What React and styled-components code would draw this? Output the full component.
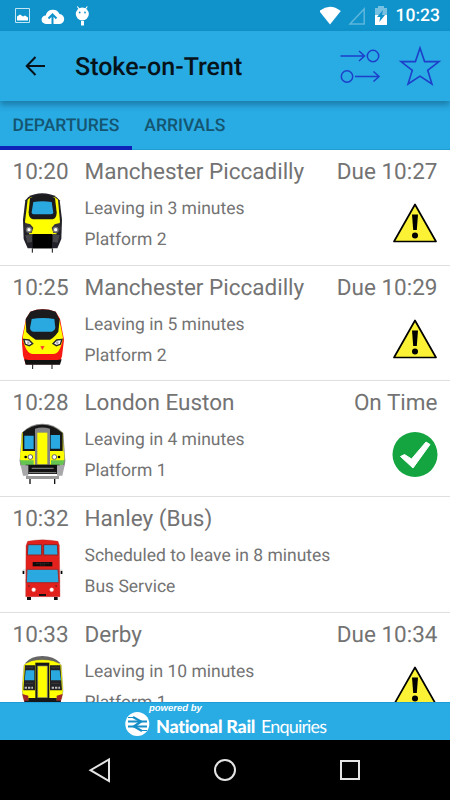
import React from "react";
import styled, { createGlobalStyle } from "styled-components";

const GlobalStyle = createGlobalStyle`
  * {
    box-sizing: border-box;
  }
  body {
    margin: 0;
    background: #fff;
    font-family: Roboto, "Liberation Sans", sans-serif;
    text-rendering: geometricPrecision;
  }
`;
const Screen = styled.div`
  display: flex;
  flex-direction: column;
  width: 450px;
  height: 800px;
  overflow: hidden;
`;
const Icon = styled.svg`
  display: block;
  flex: none;
`;
const StatusBar = styled.div`
  display: flex;
  flex: none;
  justify-content: space-between;
  height: 31px;
  background: #1093cb;
`;
const Clock = styled.span`
  width: 55px;
  padding-right: 10px;
  color: #fff;
  font-size: 17.5px;
  font-weight: 500;
  line-height: 33px;
  text-align: right;
  white-space: nowrap;
`;
const StatusGroup = styled.div`
  display: flex;
`;
const Toolbar = styled.header`
  position: relative;
  z-index: 1;
  display: flex;
  flex: none;
  align-items: center;
  height: 70px;
  background: #29abe4;
  box-shadow: 0 4px 6px rgba(0, 40, 60, 0.35);
`;
const Title = styled.h1`
  flex: 1;
  margin: 0;
  padding-top: 4px;
  color: #07131a;
  font-size: 25px;
  font-weight: 500;
  line-height: 30px;
`;
const Tabs = styled.nav`
  display: flex;
  flex: none;
  height: 49px;
  background: #29abe4;
  box-shadow: inset 0 -1px #209cd2;
`;
const Tab = styled.div`
  height: 49px;
  padding: 0 12.5px;
  border-bottom: 4px solid ${(p) => (p.$active ? "#0e22b8" : "transparent")};
  color: #145571;
  font-size: 17.5px;
  font-weight: 500;
  line-height: 51px;
`;
const List = styled.main`
  flex: 1;
  min-height: 0;
  overflow: hidden;
  background: #fff;
`;
const Row = styled.div`
  display: grid;
  grid-template-columns: 72px 1fr auto;
  grid-template-rows: 40px 1fr;
  height: 115.67px;
  padding: 0 12.5px;
  border-bottom: 1px solid #dfdfdf;
  color: #737373;
`;
const Heading = styled.span`
  font-size: 22.5px;
  line-height: 45px;
  white-space: nowrap;
`;
const TrainCell = styled.div`
  padding-left: 9.5px;
`;
const Details = styled.div`
  padding-top: 4px;
  font-size: 17.5px;
  line-height: 31px;
  white-space: nowrap;
`;
const State = styled.div`
  display: flex;
  justify-content: flex-end;
  padding-top: 11px;
`;
const Footer = styled.footer`
  display: flex;
  flex: none;
  height: 38px;
  padding-left: 125px;
  border-top: 1px solid #1d9bd8;
  background: #29abe4;
  color: #fff;
`;
const Brand = styled.div`
  padding-left: 6px;
`;
const Powered = styled.div`
  margin-left: -7px;
  font: italic bold 9.5px/12px "Liberation Sans", Arial, sans-serif;
`;
const BrandName = styled.div`
  padding-top: 1px;
  font: 400 18px/21px Lato, sans-serif;
  letter-spacing: -0.85px;
  white-space: nowrap;
`;
const Strong = styled.b`
  margin-right: 6px;
  font-weight: 900;
  letter-spacing: -0.3px;
`;
const NavBar = styled.div`
  flex: none;
  height: 60px;
  background: #000;
`;

const Notifications = () => (
  <Icon width="100" height="31" fill="#fff">
    <path d="M15.5 8.5h14v14h-14z" fill="none" stroke="#c3e4f2" />
    <path d="M17 20.500v-4l3-2 3 2 2-1 3 2v3z" />
    <path d="M46 24a4.3 4.3 0 0 1-.3-8.6A7.3 7.3 0 0 1 59.5 14a5 5 0 0 1-.6 10z" />
    <path d="M52.5 24v-8M48.5 18.5l4-4 4 4" fill="none" stroke="#1093cb" strokeWidth="2" />
    <circle cx="82.3" cy="14" r="6.5" />
    <path d="m77.3 6.5 3 4M87.3 6.5l-3 4" stroke="#fff" strokeWidth="1.2" />
    <path d="M81 21h3v4.5h-3z" />
    <circle cx="79.7" cy="12.5" r=".9" fill="#1093cb" />
    <circle cx="85" cy="12.5" r=".9" fill="#1093cb" />
  </Icon>
);
const Signals = () => (
  <Icon width="75" height="31" fill="#fff">
    <path d="M-.8 11Q10 2.500 20.800 11L10 24.500z" />
    <path d="M44.200 9v15H30z" fill="none" stroke="#5db6dc" strokeWidth="1.500" />
    <path d="M55 8h3V6h6v2h3v7H55z" fill="#76c1e1" />
    <path d="M55 15h12v10H55z" />
    <path d="m63 10-6 7h3.300l-1 5 5.700-7h-3z" fill="#1093cb" />
  </Icon>
);
const BackArrow = () => (
  <Icon width="75" height="70" fill="none" stroke="#07131a" strokeWidth="2">
    <path d="M45 35H27M35.500 26 26.700 35l8.800 9" />
  </Icon>
);
const Actions = () => (
  <Icon width="110" height="70" fill="none" stroke="#1d3fca" strokeWidth="1.500">
    <path d="M.5 25h24M19 20l5.500 5-5.500 5" />
    <circle cx="33" cy="25" r="5.700" />
    <circle cx="7" cy="45.500" r="5.700" />
    <path d="M15 45.500h24M33.500 40.500l5.500 5-5.500 5" />
    <path d="m80 17 4.600 13.600H99L87.700 39.300 92 53 80 45.200 68 53l4.300-13.700L61 30.600h14.400z" strokeWidth="1.600" />
  </Icon>
);

const Warning = () => (
  <Icon width="46" height="42" viewBox="0 0 46 42">
    <path d="M23 3.500 44 40.500H2z" fill="#fbf236" stroke="#000" strokeWidth="1.700" strokeLinejoin="round" />
    <path d="M20 13.500h6l-1.200 15.500h-3.600z" />
    <circle cx="23" cy="34.500" r="3" />
  </Icon>
);
const Tick = () => (
  <Icon width="46" height="46" viewBox="0 0 46 46">
    <circle cx="23" cy="22.500" r="22.500" fill="#14a541" />
    <path d="m8.500 24.500 4-2 7 4.500L34 10l4 2.500L21 36z" fill="#fff" stroke="#fff" strokeLinejoin="round" />
  </Icon>
);

const Voyager = () => (
  <Icon width="44" height="64" viewBox="36 15 132 192">
    <path d="M55 36Q73 25 97 25t42 11l10 10 7 58-2 58-12 28H53l-12-28-2-58 7-58z" fill="#222129" />
    <path d="M53 44 62 37 135 37 144 44 150 110 139 148H58L45 110z" fill="#ff0" />
    <path d="M60 39Q97 19 135 39L140 82Q140 101 128 103H69Q56 101 56 82z" fill="#1b1a1d" />
    <path d="M70 51Q97 47 125 51L130 83Q128 88 122 88H71Q65 88 65 82z" fill="#2aa9e0" />
    <path d="m46 114 15 4 9 10-5 16-15 1-8-15zM149 114l-15 4-9 10 5 16 15 1 8-15z" fill="#353338" />
    <circle cx="57" cy="134" r="7" fill="#fff" stroke="#777" strokeWidth="4" />
    <circle cx="137" cy="134" r="7" fill="#fff" stroke="#777" strokeWidth="4" />
    <path d="M68 147h58v43H68z" />
    <path d="m46 150 20-2v23l-14 2zM149 150l-20-2v23l14 2z" fill="#454549" />
    <path d="M67 190v13M127 190v13" stroke="#111" strokeWidth="3" />
  </Icon>
);
const Pendolino = () => (
  <Icon width="44" height="64" viewBox="36 17 132 192">
    <path d="M61 34Q97 20 137 34l13 21 12 63-6 49-8 25H47l-8-27-4-47 13-63z" fill="#f71a12" />
    <path d="M49 56 59 39H137L148 58 159 112Q151 160 130 161H69Q47 160 38 112z" fill="#ff0" />
    <path d="M61 34Q97 20 137 34L149 58 145 94Q132 112 120 118H77Q62 110 49 95L47 56z" fill="#1b1a1d" />
    <path d="M65 56Q98 50 133 56L136 83Q134 92 126 94H70Q61 92 60 83z" fill="#2aa9e0" />
    <path d="m41 117 16 2 11 11-10 6-12-4zM156 117l-16 2-11 11 10 6 12-4z" fill="#fff" stroke="#25272a" strokeWidth="4" />
    <circle cx="55" cy="127" r="4" fill="#aaa" />
    <circle cx="142" cy="127" r="4" fill="#aaa" />
    <path d="m92 138 5 10 6-10z" fill="#f33" stroke="#f33" />
    <path d="m43 177 12 2h88l12-2-5 16H47z" fill="#111" />
    <path d="M68 192v14M126 192v14" stroke="#111" strokeWidth="3" />
  </Icon>
);
const Midland = () => (
  <Icon width="44" height="64" viewBox="36 19 132 192" overflow="visible">
    <path d="M35 55Q60 27 97 27t63 28l6 83-2 15H31l-2-15z" fill="#888" />
    <path d="M36 55Q64 33 97 33t61 22l4 78-4 17H36l-5-17z" fill="#ff0" />
    <path d="M38 53Q64 30 97 30t61 25v54H38z" fill="#171718" />
    <path d="M43 63h28v40H43zM122 61h28v41h-28z" fill="#2aa9e0" />
    <path d="M31 113h40v22H31zM123 113h40v22h-40z" fill="#ff0" />
    <path d="M29 137h42v14H35zM123 137h42l-7 14h-35z" fill="#65c553" />
    <path d="M75 42q22-7 45 0v109H75z" fill="#858585" />
    <path d="M82 54h30v95H82z" fill="#ff0" />
    <path d="M47 150h102v28H47z" fill="#111" />
    <path d="M32 152h23v31H39zM141 152h23l-7 31h-16z" fill="#a7a7aa" />
    <path d="M65 161h66M57 174h82" stroke="#777" strokeWidth="4" />
    <path d="M48 184h99v9H48z" fill="#999" />
    <circle cx="47" cy="127" r="4" />
    <circle cx="147" cy="127" r="4" />
    <circle cx="61" cy="127" r="7" fill="#fff" stroke="#666" strokeWidth="3" />
    <circle cx="133" cy="127" r="7" fill="#fff" stroke="#666" strokeWidth="3" />
    <path d="M60 193v15M134 193v15" stroke="#111" strokeWidth="4" />
  </Icon>
);
const Bus = () => (
  <Icon width="44" height="64" viewBox="36 21 132 192">
    <path d="M53 34Q97 25 144 34l4 12 2 154H47l1-153z" fill="#e2211c" stroke="#a8302c" />
    <path d="M54 44h41v31H52zM101 44h41l2 31h-43z" fill="#2aa9e0" stroke="#8f2422" strokeWidth="3" />
    <path d="M68 96h59v13H68z" fill="#130a0a" />
    <path d="M78 100h40M90 105h16" stroke="#777" strokeDasharray="3 1" />
    <path d="M51 118h93l3 40H49z" fill="#2aa9e0" stroke="#a52a27" strokeWidth="3" />
    <path d="M46 120h-7v11M151 120h5v11" fill="none" stroke="#777" />
    <path d="M38 123h5v9h-5zM152 123h5v9h-5z" />
    <circle cx="71" cy="179" r="6" fill="#fff" stroke="#f4a19b" />
    <circle cx="125" cy="179" r="6" fill="#fff" stroke="#f4a19b" />
    <path d="M54 168h5M136 168h5" stroke="#742020" strokeWidth="5" />
    <path d="M87 192h21v6H87zM51 201h12v9H51zM132 201h11v9h-11z" fill="#111" />
  </Icon>
);
const Sprinter = () => (
  <Icon width="44" height="64" viewBox="66 128 132 192">
    <path d="M75 159Q93 137 127 137t55 22z" fill="#666" />
    <path d="M72 164Q89 148 127 148t57 16l5 78-4 22-17 20H87l-17-20-4-24z" fill="#ff0" stroke="#555" />
    <path d="M75 165h30v75H70zM150 165h31l5 75h-36z" fill="#222226" />
    <path d="M77 180h26v30H74zM153 180h26l4 30h-30z" fill="#2aa9e0" />
    <path d="M76 172h24M154 172h24M76 219h24M154 219h24" stroke="#444" strokeWidth="2" />
    <path d="M74 232h25M155 232h25" stroke="#bbb" strokeWidth="6" strokeDasharray="7 3" />
    <path d="M106 157h42v108h-42z" fill="#171719" />
    <path d="M113 167h29v95h-29z" fill="#ff0" stroke="#888" strokeWidth="2" />
    <path d="m67 251 18 5v20H73zM188 251l-18 5v20h12z" fill="#9e252a" />
    <path d="M85 263h85v30H85zM74 271h108v12H74z" fill="#171719" />
  </Icon>
);

const RailLogo = () => (
  <Icon width="25" height="37" viewBox="0 0 25 37">
    <circle cx="12.300" cy="21" r="12" fill="#fff" />
    <g fill="none" stroke="#168ec8" strokeWidth="1.900">
      <path d="M3 18.500h19M3 23.500h19" />
      <path d="m8 14 8 4.500-7 5 8 4.500" strokeWidth="2.300" />
      <path d="M3 14.500h6M16 27.500h6" strokeWidth="1" />
    </g>
  </Icon>
);

const services = [
  { time: "10:20", to: "Manchester Piccadilly", due: "Due 10:27", leaving: "Leaving in 3 minutes", place: "Platform 2", Train: Voyager, Sign: Warning },
  { time: "10:25", to: "Manchester Piccadilly", due: "Due 10:29", leaving: "Leaving in 5 minutes", place: "Platform 2", Train: Pendolino, Sign: Warning },
  { time: "10:28", to: "London Euston", due: "On Time", leaving: "Leaving in 4 minutes", place: "Platform 1", Train: Midland, Sign: Tick },
  { time: "10:32", to: "Hanley (Bus)", due: "", leaving: "Scheduled to leave in 8 minutes", place: "Bus Service", Train: Bus },
  { time: "10:33", to: "Derby", due: "Due 10:34", leaving: "Leaving in 10 minutes", place: "Platform 1", Train: Sprinter, Sign: Warning },
];

const App = () => {
  return (
    <Screen>
      <GlobalStyle />
      <StatusBar>
        <Notifications />
        <StatusGroup>
          <Signals />
          <Clock>10:23</Clock>
        </StatusGroup>
      </StatusBar>
      <Toolbar>
        <BackArrow />
        <Title>Stoke-on-Trent</Title>
        <Actions />
      </Toolbar>
      <Tabs>
        <Tab $active>DEPARTURES</Tab>
        <Tab>ARRIVALS</Tab>
      </Tabs>
      <List>
        {services.map(({ time, to, due, leaving, place, Train, Sign }) => (
          <Row key={time}>
            <Heading>{time}</Heading>
            <Heading>{to}</Heading>
            <Heading>{due}</Heading>
            <TrainCell>
              <Train />
            </TrainCell>
            <Details>
              <div>{leaving}</div>
              <div>{place}</div>
            </Details>
            <State>{Sign && <Sign />}</State>
          </Row>
        ))}
      </List>
      <Footer>
        <RailLogo />
        <Brand>
          <Powered>powered by</Powered>
          <BrandName>
            <Strong>National Rail</Strong>
            Enquiries
          </BrandName>
        </Brand>
      </Footer>
      <NavBar>
        <Icon width="450" height="60" fill="none" stroke="#e4e4e4" strokeWidth="2">
          <path d="M109 19.500v21.500L90.500 30.200z" />
          <circle cx="225" cy="30" r="10" />
          <path d="M341 21h18v18h-18z" />
        </Icon>
      </NavBar>
    </Screen>
  );
};

export default App;
